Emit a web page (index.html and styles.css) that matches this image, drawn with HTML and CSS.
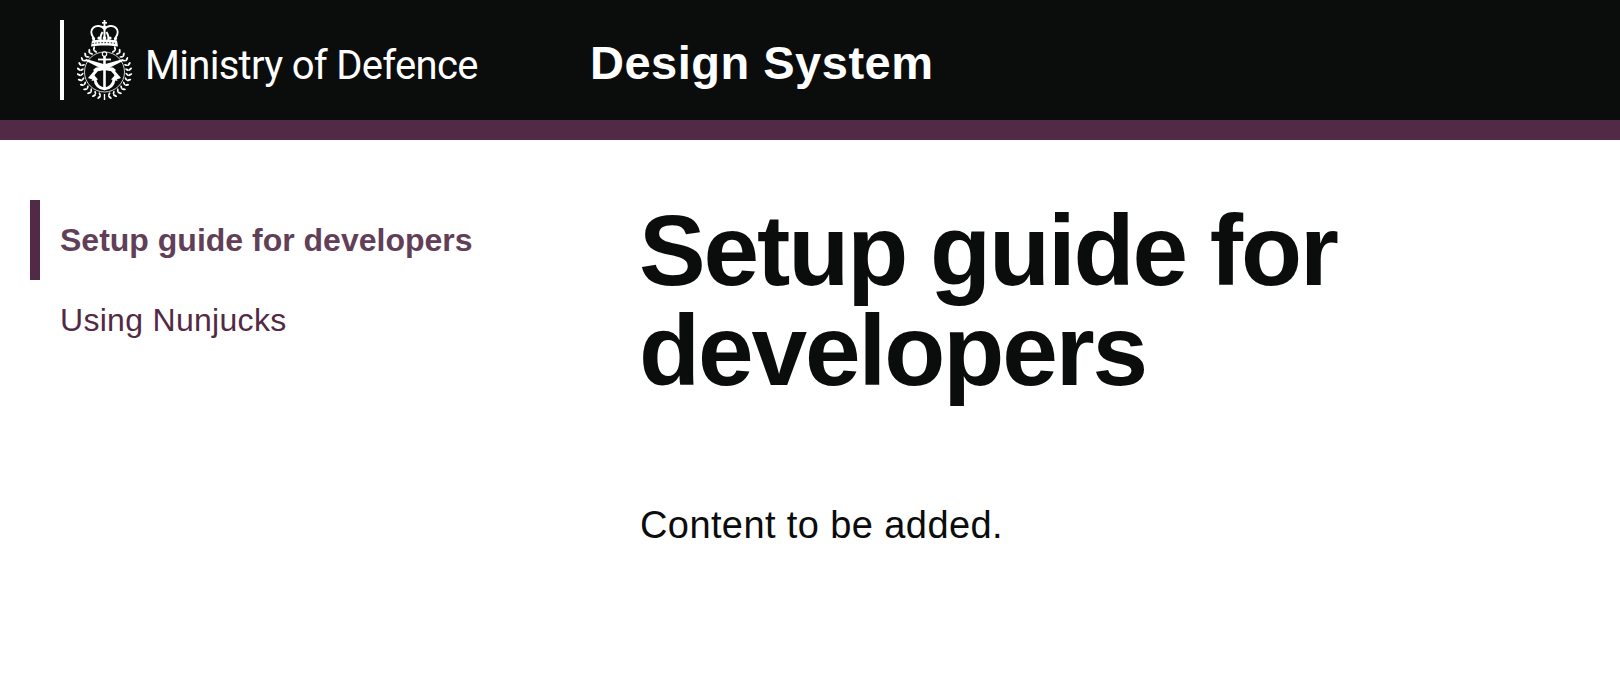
FILE: index.html
```html
<!DOCTYPE html>
<html lang="en">
<head>
    <meta charset="UTF-8">
    <meta name="viewport" content="width=device-width, initial-scale=1.0">
    <title>Setup guide for developers</title>
    <link rel="stylesheet" href="styles.css">
</head>
<body>

    <header class="site-header">
        <a class="logo" href="#">
            <svg class="crest" viewBox="0 0 56 80" width="56" height="80" aria-hidden="true">
                <defs>
                    <g id="leaf" fill="#fff">
                        <ellipse cx="0" cy="-25.800" rx="1" ry="2.300" transform="rotate(35 0 -25.800)"/>
                        <ellipse cx="0" cy="-22.600" rx=".9" ry="2" transform="rotate(-35 0 -22.600)"/>
                    </g>
                    <g id="wreath">
                        <use href="#leaf" transform="translate(27.500 52) rotate(-24)"/>
                        <use href="#leaf" transform="translate(27.500 52) rotate(-36)"/>
                        <use href="#leaf" transform="translate(27.500 52) rotate(-48)"/>
                        <use href="#leaf" transform="translate(27.500 52) rotate(-60)"/>
                        <use href="#leaf" transform="translate(27.500 52) rotate(-72)"/>
                        <use href="#leaf" transform="translate(27.500 52) rotate(-84)"/>
                        <use href="#leaf" transform="translate(27.500 52) rotate(-96)"/>
                        <use href="#leaf" transform="translate(27.500 52) rotate(-108)"/>
                        <use href="#leaf" transform="translate(27.500 52) rotate(-120)"/>
                        <use href="#leaf" transform="translate(27.500 52) rotate(-132)"/>
                        <use href="#leaf" transform="translate(27.500 52) rotate(-144)"/>
                        <use href="#leaf" transform="translate(27.500 52) rotate(-156)"/>
                        <use href="#leaf" transform="translate(27.500 52) rotate(-168)"/>
                    </g>
                </defs>
                <!-- crown -->
                <g fill="none" stroke="#fff" stroke-width="2">
                    <path d="M27.500 9c-3-3.500-8-4-11-1.500-3 2.500-2.500 6.500-.5 9.500l1.500 4"/>
                    <path d="M27.500 9c3-3.500 8-4 11-1.500 3 2.500 2.500 6.500 .5 9.500l-1.500 4"/>
                    <path d="M27.500 9v11M25.500 12c-1.500 2-2 5-2 8M29.500 12c1.500 2 2 5 2 8"/>
                </g>
                <g fill="#fff">
                    <rect x="26.600" y="0" width="1.800" height="7"/>
                    <rect x="25" y="2" width="5" height="1.600"/>
                    <circle cx="27.500" cy="7.500" r="2"/>
                    <circle cx="16.500" cy="18.500" r="1.600"/>
                    <circle cx="22" cy="18" r="1.600"/>
                    <circle cx="27.500" cy="18" r="1.800"/>
                    <circle cx="33" cy="18" r="1.600"/>
                    <circle cx="38.500" cy="18.500" r="1.600"/>
                    <path d="M15 20.500c6-1.500 19-1.500 25 0l1 6c-8-1.500-19-1.500-27 0z"/>
                </g>
                <path d="M15.500 23.500c7-1.200 17-1.200 24 0" fill="none" stroke="#0b0c0c" stroke-width=".9" stroke-dasharray="1.500 1.500"/>
                <!-- wreath -->
                <use href="#wreath"/>
                <use href="#wreath" transform="translate(55 0) scale(-1 1)"/>
                <circle cx="27.500" cy="52" r="20" fill="none" stroke="#fff" stroke-width=".8"/>
                <rect x="26.800" y="74" width="1.400" height="6" fill="#fff"/>
                <!-- anchor -->
                <g fill="none" stroke="#fff">
                    <circle cx="27.500" cy="34" r="2.200" stroke-width="1.100"/>
                    <path d="M27.500 36v32" stroke-width="2.600"/>
                    <path d="M21 39.500h13" stroke-width="1.800"/>
                    <path d="M18 59.500c.5 5.500 4.500 8.500 9.500 9.500 5-1 9-4 9.500-9.500" stroke-width="2.800"/>
                </g>
                <g fill="#fff">
                    <path d="M14.500 61l2.500-6 4 4.500zM40.500 61l-2.500-6-4 4.500z"/>
                    <!-- swords -->
                    <path d="M9 39l21 6 6 6.500-9-1.500-19-9.500z"/>
                    <path d="M46 39l-21 6-6 6.500 9-1.500 19-9.500z"/>
                    <!-- rifles -->
                    <path d="M11 58l6-7-1-1 3-2.500 6-.5 1 2.500-5 1.500-3 3.500-2.500 5z"/>
                    <path d="M44 58l-6-7 1-1-3-2.500-6-.5-1 2.500 5 1.500 3 3.500 2.500 5z"/>
                </g>
            </svg>
            <span class="logo-text">Ministry of Defence</span>
        </a>
        <span class="service-name">Design System</span>
    </header>
    <div class="header-bar"></div>

    <div class="layout">
        <nav class="side-nav">
            <a class="side-link active" href="#">Setup guide for developers</a>
            <a class="side-link" href="#">Using Nunjucks</a>
        </nav>
        <main class="content">
            <h1>Setup guide for developers</h1>
            <p>Content to be added.</p>
        </main>
    </div>

</body>
</html>
```

FILE: styles.css
```css
body {
    font-family: "Liberation Sans", Arial, sans-serif;
    background-color: #ffffff;
    color: #0b0c0c;
    margin: 0;
    padding: 0;
}

a {
    text-decoration: none;
}

.site-header {
    background-color: #0b0c0c;
    height: 120px;
    display: flex;
    align-items: center;
    padding-left: 60px;
}

.logo {
    display: flex;
    align-items: center;
    width: 530px;
    height: 80px;
    border-left: 4px solid #ffffff;
    box-sizing: border-box;
    padding-left: 13px;
    color: #ffffff;
}

.crest {
    flex: none;
}

.logo-text {
    font-family: Roboto, sans-serif;
    font-weight: 400;
    font-size: 40px;
    letter-spacing: -.7px;
    margin-left: 12px;
    margin-top: 11px;
    white-space: nowrap;
}

.service-name {
    color: #ffffff;
    font-size: 47px;
    letter-spacing: .5px;
    font-weight: 700;
    line-height: 1;
    margin-top: 4px;
}

.header-bar {
    background-color: #532a45;
    height: 20px;
}

.layout {
    display: flex;
    padding: 60px 30px 0;
}

.side-nav {
    width: 610px;
    flex: none;
    display: flex;
    flex-direction: column;
}

.side-link {
    display: flex;
    align-items: center;
    height: 80px;
    padding-left: 20px;
    border-left: 10px solid transparent;
    font-size: 32px;
    letter-spacing: .3px;
    color: #532a45;
}

.side-link.active {
    border-left-color: #532a45;
    font-weight: 700;
    letter-spacing: 0;
    color: #623f58;
}

.content {
    flex: 1;
}

.content h1 {
    font-size: 100px;
    line-height: 100px;
    letter-spacing: -2.100px;
    word-spacing: -2px;
    font-weight: 700;
    margin: 0 0 100px -1px;
}

.content p {
    font-size: 38px;
    letter-spacing: .4px;
    line-height: 50px;
    margin: 0;
}
```
